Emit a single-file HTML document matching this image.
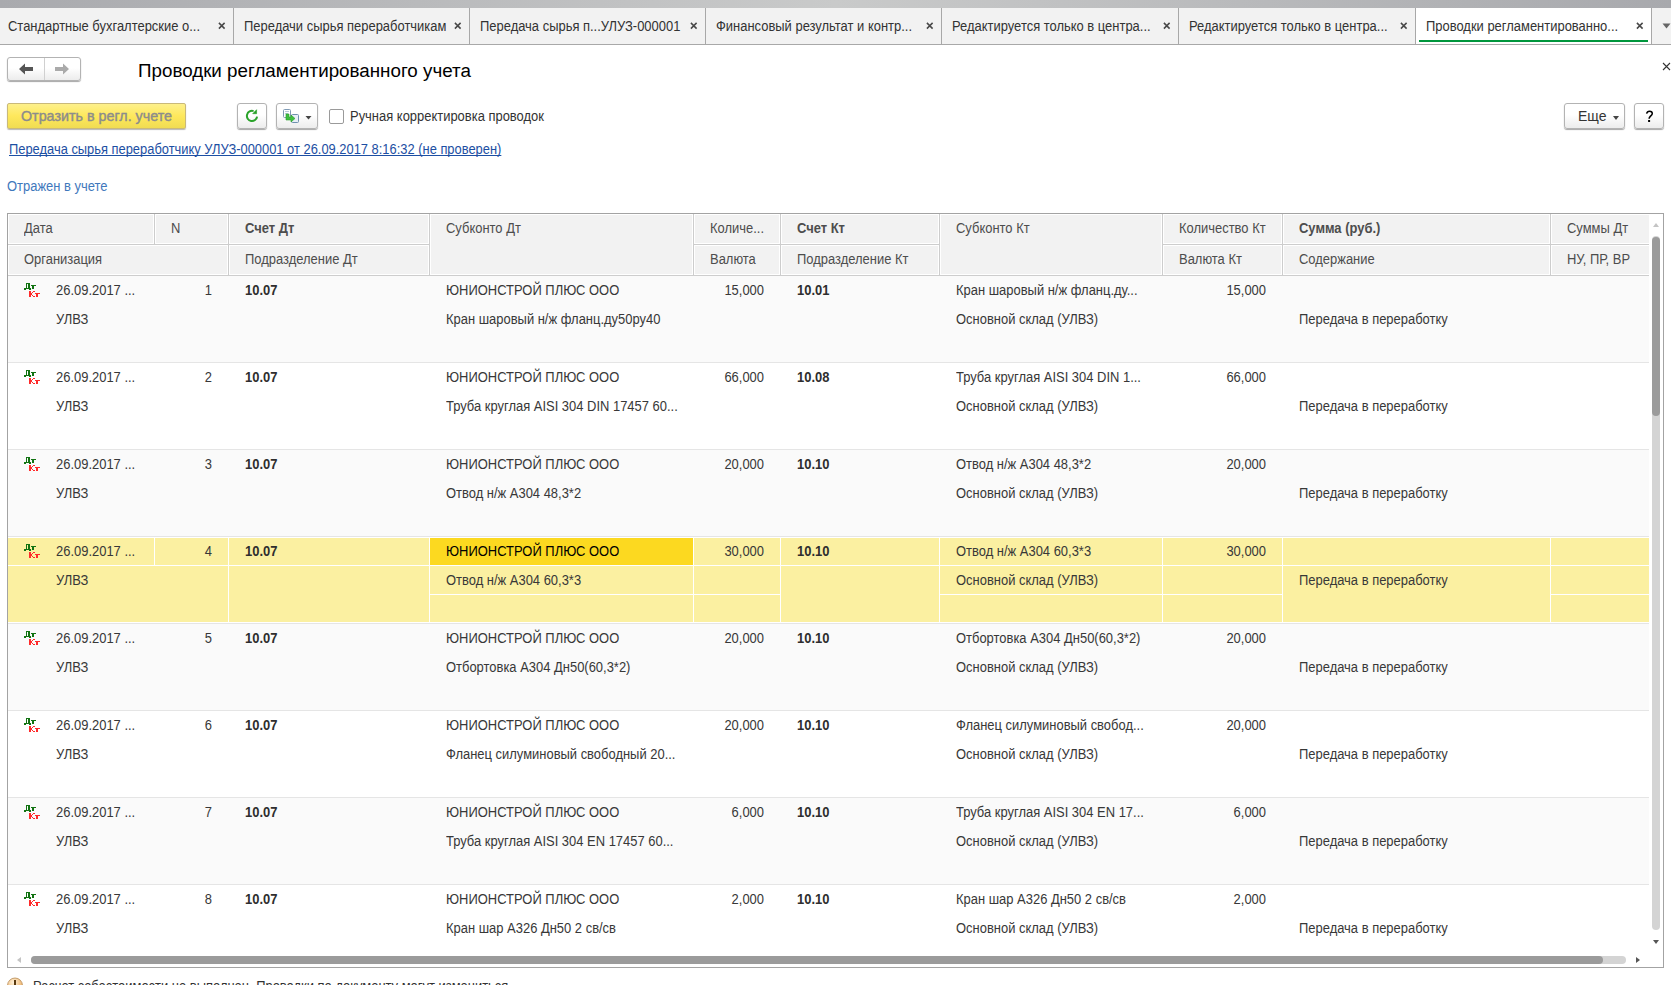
<!DOCTYPE html>
<html><head><meta charset="utf-8"><title>Проводки регламентированного учета</title><style>
*{margin:0;padding:0;box-sizing:content-box}
html,body{width:1671px;height:985px;overflow:hidden;background:#fff}
body{position:relative;font-family:"Liberation Sans",sans-serif;font-size:13px}
div,svg{position:absolute}
.t{white-space:nowrap;font-size:13px;line-height:15px}
.s{font-size:14px;transform:scaleX(0.925);transform-origin:0 0}
.btn{border:1px solid #b3b3b3;border-radius:3px;background:linear-gradient(#ffffff 0%,#ffffff 45%,#ececec 100%);box-shadow:0 1px 1px rgba(0,0,0,0.35)}
.ybtn{border:1px solid #c9b97a;border-radius:2px;background:linear-gradient(#fdf08c 0%,#fee85c 50%,#f0dc52 100%);box-shadow:0 1px 1px rgba(0,0,0,0.28)}
</style></head>
<body>
<div style="left:0px;top:0px;width:1671px;height:8px;background:linear-gradient(to right,#a9aaae 0%,#c9caca 50%,#a8a9ad 100%)"></div>
<div style="left:0px;top:8px;width:1671px;height:36px;background:#f2f2f2"></div>
<div style="left:0px;top:44px;width:1671px;height:1px;background:#a8a8a8"></div>
<div style="left:1416px;top:8px;width:235px;height:36px;background:#fff"></div>
<div style="left:1419px;top:40px;width:229px;height:2px;background:#00963c"></div>
<div style="left:233px;top:8px;width:1px;height:37px;background:#a8a8a8"></div>
<div style="left:469px;top:8px;width:1px;height:37px;background:#a8a8a8"></div>
<div style="left:705px;top:8px;width:1px;height:37px;background:#a8a8a8"></div>
<div style="left:941px;top:8px;width:1px;height:37px;background:#a8a8a8"></div>
<div style="left:1178px;top:8px;width:1px;height:37px;background:#a8a8a8"></div>
<div style="left:1415px;top:8px;width:1px;height:37px;background:#a8a8a8"></div>
<div style="left:1651px;top:8px;width:1px;height:37px;background:#a8a8a8"></div>
<div class="t s" style="left:8px;top:19px;color:#333;">Стандартные бухгалтерские о...</div>
<svg style="left:218px;top:22px" width="8" height="8" viewBox="0 0 8 8"><path d="M0.9 0.9L6.6 6.6M6.6 0.9L0.9 6.6" stroke="#474747" stroke-width="1.5"/></svg>
<div class="t s" style="left:244px;top:19px;color:#333;">Передачи сырья переработчикам</div>
<svg style="left:454px;top:22px" width="8" height="8" viewBox="0 0 8 8"><path d="M0.9 0.9L6.6 6.6M6.6 0.9L0.9 6.6" stroke="#474747" stroke-width="1.5"/></svg>
<div class="t s" style="left:480px;top:19px;color:#333;">Передача сырья п...УЛУЗ-000001</div>
<svg style="left:690px;top:22px" width="8" height="8" viewBox="0 0 8 8"><path d="M0.9 0.9L6.6 6.6M6.6 0.9L0.9 6.6" stroke="#474747" stroke-width="1.5"/></svg>
<div class="t s" style="left:716px;top:19px;color:#333;">Финансовый результат и контр...</div>
<svg style="left:926px;top:22px" width="8" height="8" viewBox="0 0 8 8"><path d="M0.9 0.9L6.6 6.6M6.6 0.9L0.9 6.6" stroke="#474747" stroke-width="1.5"/></svg>
<div class="t s" style="left:952px;top:19px;color:#333;">Редактируется только в центра...</div>
<svg style="left:1163px;top:22px" width="8" height="8" viewBox="0 0 8 8"><path d="M0.9 0.9L6.6 6.6M6.6 0.9L0.9 6.6" stroke="#474747" stroke-width="1.5"/></svg>
<div class="t s" style="left:1189px;top:19px;color:#333;">Редактируется только в центра...</div>
<svg style="left:1400px;top:22px" width="8" height="8" viewBox="0 0 8 8"><path d="M0.9 0.9L6.6 6.6M6.6 0.9L0.9 6.6" stroke="#474747" stroke-width="1.5"/></svg>
<div class="t s" style="left:1426px;top:19px;color:#333;">Проводки регламентированно...</div>
<svg style="left:1636px;top:22px" width="8" height="8" viewBox="0 0 8 8"><path d="M0.9 0.9L6.6 6.6M6.6 0.9L0.9 6.6" stroke="#474747" stroke-width="1.5"/></svg>
<svg style="left:1662px;top:23px" width="9" height="7" viewBox="0 0 9 7"><path d="M0.5 0.5H8.5L4.5 5.5Z" fill="#666"/></svg>
<div class="btn" style="left:7px;top:57px;width:72px;height:22px"></div>
<div style="left:44px;top:58px;width:1px;height:22px;background:#d0d0d0"></div>
<svg style="left:19px;top:63px" width="15" height="12" viewBox="0 0 15 12"><path d="M0 6L6 0.5V4H14V8H6V11.5Z" fill="#555"/></svg>
<svg style="left:55px;top:63px" width="15" height="12" viewBox="0 0 15 12"><path d="M14 6L8 0.5V4H0V8H8V11.5Z" fill="#aaa"/></svg>
<div class="t" style="left:138px;top:60px;font-size:18.8px;line-height:21px;color:#000">Проводки регламентированного учета</div>
<svg style="left:1662px;top:62px" width="9" height="9" viewBox="0 0 9 9"><path d="M1 1L8 8M8 1L1 8" stroke="#333" stroke-width="1.1"/></svg>
<div class="ybtn" style="left:7px;top:103px;width:177px;height:24px"></div>
<div class="t" style="left:21px;top:109px;color:#8c8c8c;font-size:14.3px;-webkit-text-stroke:0.4px #8c8c8c">Отразить в регл. учете</div>
<div class="btn" style="left:237px;top:103px;width:28px;height:24px"></div>
<svg style="left:242px;top:106px" width="20" height="20" viewBox="0 0 20 20"><path d="M15.07 10.53A5.1 5.1 0 1 1 11.6 5.1" fill="none" stroke="#2aa32a" stroke-width="2"/><path d="M14.6 3.7V7.7H10.7Z" fill="#26a026" stroke="#26a026" stroke-width="0.6" stroke-linejoin="round"/></svg>
<div class="btn" style="left:276px;top:103px;width:40px;height:24px"></div>
<svg style="left:280px;top:106px" width="22" height="20" viewBox="0 0 22 20"><rect x="3.5" y="3.5" width="7" height="8" rx="1" fill="#fff" stroke="#7f9ab5"/><rect x="5" y="5" width="4" height="1" fill="#b9c9da"/><rect x="5" y="7" width="3" height="1" fill="#b9c9da"/><rect x="11.5" y="8.5" width="7" height="8" rx="1" fill="#e8eff7" stroke="#6f8fae"/><path d="M6 8H9V11H11V9L15 12.5L11 16V14H6Z" fill="#3fbf3f" stroke="#2c9e2c" stroke-width="0.6" stroke-linejoin="round"/></svg>
<svg style="left:305px;top:116px" width="7" height="4" viewBox="0 0 7 4"><path d="M0.5 0H6.5L3.5 3.5Z" fill="#444"/></svg>
<div style="left:329px;top:109px;width:13px;height:13px;border:1px solid #9a9a9a;border-radius:2px;background:#fff"></div>
<div class="t s" style="left:350px;top:109px;color:#333;">Ручная корректировка проводок</div>
<div class="btn" style="left:1564px;top:103px;width:59px;height:24px"></div>
<div class="t" style="left:1578px;top:109px;color:#333;font-size:14px">Еще</div>
<svg style="left:1613px;top:116px" width="6" height="4" viewBox="0 0 6 4"><path d="M0 0H6L3 4Z" fill="#444"/></svg>
<div class="btn" style="left:1634px;top:103px;width:28px;height:24px"></div>
<svg style="left:1638px;top:106px" width="22" height="20" viewBox="0 0 22 20"><path d="M8.6 7.7C9 5.9 10.2 5.2 11.5 5.2C13.2 5.2 14.3 6.3 14.3 7.5C14.3 8.9 13.1 9.6 12.3 10.4C11.6 11.1 11.1 11.8 11.1 12.7" fill="none" stroke="#000" stroke-width="1.5"/><rect x="10.1" y="14" width="2" height="2" fill="#000"/></svg>
<div class="t s" style="left:9px;top:142px;color:#1d4fa3;text-decoration:underline;text-decoration-skip-ink:none;transform:scaleX(0.921)">Передача сырья переработчику УЛУЗ-000001 от 26.09.2017 8:16:32 (не проверен)</div>
<div class="t s" style="left:7px;top:179px;color:#3f78bc;">Отражен в учете</div>
<div style="left:7px;top:213px;width:1655px;height:753px;border:1px solid #a3a3a3;background:#fff"></div>
<div style="left:8px;top:214px;width:1641px;height:61px;background:#f2f2f2"></div>
<div style="left:8px;top:214px;width:144px;height:28px;border:1px solid #fff;background:#f2f2f2"></div>
<div style="left:155px;top:214px;width:71px;height:28px;border:1px solid #fff;background:#f2f2f2"></div>
<div style="left:8px;top:245px;width:218px;height:28px;border:1px solid #fff;background:#f2f2f2"></div>
<div style="left:229px;top:214px;width:198px;height:28px;border:1px solid #fff;background:#f2f2f2"></div>
<div style="left:229px;top:245px;width:198px;height:28px;border:1px solid #fff;background:#f2f2f2"></div>
<div style="left:430px;top:214px;width:261px;height:59px;border:1px solid #fff;background:#f2f2f2"></div>
<div style="left:694px;top:214px;width:84px;height:28px;border:1px solid #fff;background:#f2f2f2"></div>
<div style="left:694px;top:245px;width:84px;height:28px;border:1px solid #fff;background:#f2f2f2"></div>
<div style="left:781px;top:214px;width:156px;height:28px;border:1px solid #fff;background:#f2f2f2"></div>
<div style="left:781px;top:245px;width:156px;height:28px;border:1px solid #fff;background:#f2f2f2"></div>
<div style="left:940px;top:214px;width:220px;height:59px;border:1px solid #fff;background:#f2f2f2"></div>
<div style="left:1163px;top:214px;width:117px;height:28px;border:1px solid #fff;background:#f2f2f2"></div>
<div style="left:1163px;top:245px;width:117px;height:28px;border:1px solid #fff;background:#f2f2f2"></div>
<div style="left:1283px;top:214px;width:265px;height:28px;border:1px solid #fff;background:#f2f2f2"></div>
<div style="left:1283px;top:245px;width:265px;height:28px;border:1px solid #fff;background:#f2f2f2"></div>
<div style="left:1551px;top:214px;width:97px;height:28px;border:1px solid #fff;background:#f2f2f2"></div>
<div style="left:1551px;top:245px;width:97px;height:28px;border:1px solid #fff;background:#f2f2f2"></div>
<div style="left:8px;top:244px;width:421px;height:1px;background:#cdcdcd"></div>
<div style="left:693px;top:244px;width:246px;height:1px;background:#cdcdcd"></div>
<div style="left:1162px;top:244px;width:487px;height:1px;background:#cdcdcd"></div>
<div style="left:8px;top:275px;width:1641px;height:1px;background:#cdcdcd"></div>
<div style="left:154px;top:214px;width:1px;height:30px;background:#cdcdcd"></div>
<div style="left:228px;top:214px;width:1px;height:61px;background:#cdcdcd"></div>
<div style="left:429px;top:214px;width:1px;height:61px;background:#cdcdcd"></div>
<div style="left:693px;top:214px;width:1px;height:61px;background:#cdcdcd"></div>
<div style="left:780px;top:214px;width:1px;height:61px;background:#cdcdcd"></div>
<div style="left:939px;top:214px;width:1px;height:61px;background:#cdcdcd"></div>
<div style="left:1162px;top:214px;width:1px;height:61px;background:#cdcdcd"></div>
<div style="left:1282px;top:214px;width:1px;height:61px;background:#cdcdcd"></div>
<div style="left:1550px;top:214px;width:1px;height:61px;background:#cdcdcd"></div>
<div class="t s" style="left:24px;top:221px;color:#4d4d4d;">Дата</div>
<div class="t s" style="left:171px;top:221px;color:#4d4d4d;">N</div>
<div class="t s" style="left:245px;top:221px;font-weight:bold;color:#4d4d4d;">Счет Дт</div>
<div class="t s" style="left:446px;top:221px;color:#4d4d4d;">Субконто Дт</div>
<div class="t s" style="left:710px;top:221px;color:#4d4d4d;">Количе...</div>
<div class="t s" style="left:797px;top:221px;font-weight:bold;color:#4d4d4d;">Счет Кт</div>
<div class="t s" style="left:956px;top:221px;color:#4d4d4d;">Субконто Кт</div>
<div class="t s" style="left:1179px;top:221px;color:#4d4d4d;">Количество Кт</div>
<div class="t s" style="left:1299px;top:221px;font-weight:bold;color:#4d4d4d;">Сумма (руб.)</div>
<div class="t s" style="left:1567px;top:221px;color:#4d4d4d;">Суммы Дт</div>
<div class="t s" style="left:24px;top:252px;color:#4d4d4d;">Организация</div>
<div class="t s" style="left:245px;top:252px;color:#4d4d4d;">Подразделение Дт</div>
<div class="t s" style="left:710px;top:252px;color:#4d4d4d;">Валюта</div>
<div class="t s" style="left:797px;top:252px;color:#4d4d4d;">Подразделение Кт</div>
<div class="t s" style="left:1179px;top:252px;color:#4d4d4d;">Валюта Кт</div>
<div class="t s" style="left:1299px;top:252px;color:#4d4d4d;">Содержание</div>
<div class="t s" style="left:1567px;top:252px;color:#4d4d4d;">НУ, ПР, ВР</div>
<div style="left:8px;top:276px;width:1641px;height:674px;overflow:hidden">
<div style="left:0px;top:0px;width:1641px;height:86px;background:#fafafa"></div>
<div style="left:0px;top:86px;width:1641px;height:1px;background:#e5e5e5"></div>
<svg style="left:16px;top:7px" width="16" height="14" viewBox="0 0 16 14" shape-rendering="crispEdges"><g fill="#127312"><rect x="2" y="0" width="4" height="1"/><rect x="2" y="0" width="1" height="5"/><rect x="4" y="0" width="2" height="5"/><rect x="1" y="5" width="6" height="1"/><rect x="0" y="5" width="2" height="2"/><rect x="5" y="5" width="2" height="2"/><rect x="7" y="2" width="5" height="1"/><rect x="8" y="3" width="2" height="3"/></g><g fill="#ff2a2a"><rect x="5" y="8" width="2" height="6"/><rect x="7" y="10" width="1" height="2"/><rect x="8" y="9" width="1" height="1"/><rect x="9" y="8" width="2" height="1"/><rect x="8" y="12" width="1" height="1"/><rect x="9" y="13" width="2" height="1"/><rect x="11" y="10" width="5" height="1"/><rect x="12" y="11" width="2" height="3"/></g></svg>
<div class="t s" style="left:48px;top:7px;color:#383838;">26.09.2017 ...</div>
<div class="t s" style="left:4px;width:200px;top:7px;color:#383838;text-align:right;transform-origin:100% 0">1</div>
<div class="t s" style="left:237px;top:7px;font-weight:bold;color:#2e2e2e;">10.07</div>
<div class="t s" style="left:438px;top:7px;color:#383838;">ЮНИОНСТРОЙ ПЛЮС ООО</div>
<div class="t s" style="left:556px;width:200px;top:7px;color:#383838;text-align:right;transform-origin:100% 0">15,000</div>
<div class="t s" style="left:789px;top:7px;font-weight:bold;color:#2e2e2e;">10.01</div>
<div class="t s" style="left:948px;top:7px;color:#383838;">Кран шаровый н/ж фланц.ду...</div>
<div class="t s" style="left:1058px;width:200px;top:7px;color:#383838;text-align:right;transform-origin:100% 0">15,000</div>
<div class="t s" style="left:48px;top:36px;color:#383838;">УЛВЗ</div>
<div class="t s" style="left:438px;top:36px;color:#383838;">Кран шаровый н/ж фланц.ду50ру40</div>
<div class="t s" style="left:948px;top:36px;color:#383838;">Основной склад (УЛВЗ)</div>
<div class="t s" style="left:1291px;top:36px;color:#383838;">Передача в переработку</div>
<div style="left:0px;top:87px;width:1641px;height:86px;background:#fff"></div>
<div style="left:0px;top:173px;width:1641px;height:1px;background:#e5e5e5"></div>
<svg style="left:16px;top:94px" width="16" height="14" viewBox="0 0 16 14" shape-rendering="crispEdges"><g fill="#127312"><rect x="2" y="0" width="4" height="1"/><rect x="2" y="0" width="1" height="5"/><rect x="4" y="0" width="2" height="5"/><rect x="1" y="5" width="6" height="1"/><rect x="0" y="5" width="2" height="2"/><rect x="5" y="5" width="2" height="2"/><rect x="7" y="2" width="5" height="1"/><rect x="8" y="3" width="2" height="3"/></g><g fill="#ff2a2a"><rect x="5" y="8" width="2" height="6"/><rect x="7" y="10" width="1" height="2"/><rect x="8" y="9" width="1" height="1"/><rect x="9" y="8" width="2" height="1"/><rect x="8" y="12" width="1" height="1"/><rect x="9" y="13" width="2" height="1"/><rect x="11" y="10" width="5" height="1"/><rect x="12" y="11" width="2" height="3"/></g></svg>
<div class="t s" style="left:48px;top:94px;color:#383838;">26.09.2017 ...</div>
<div class="t s" style="left:4px;width:200px;top:94px;color:#383838;text-align:right;transform-origin:100% 0">2</div>
<div class="t s" style="left:237px;top:94px;font-weight:bold;color:#2e2e2e;">10.07</div>
<div class="t s" style="left:438px;top:94px;color:#383838;">ЮНИОНСТРОЙ ПЛЮС ООО</div>
<div class="t s" style="left:556px;width:200px;top:94px;color:#383838;text-align:right;transform-origin:100% 0">66,000</div>
<div class="t s" style="left:789px;top:94px;font-weight:bold;color:#2e2e2e;">10.08</div>
<div class="t s" style="left:948px;top:94px;color:#383838;">Труба круглая AISI 304 DIN 1...</div>
<div class="t s" style="left:1058px;width:200px;top:94px;color:#383838;text-align:right;transform-origin:100% 0">66,000</div>
<div class="t s" style="left:48px;top:123px;color:#383838;">УЛВЗ</div>
<div class="t s" style="left:438px;top:123px;color:#383838;">Труба круглая AISI 304 DIN 17457 60...</div>
<div class="t s" style="left:948px;top:123px;color:#383838;">Основной склад (УЛВЗ)</div>
<div class="t s" style="left:1291px;top:123px;color:#383838;">Передача в переработку</div>
<div style="left:0px;top:174px;width:1641px;height:86px;background:#fafafa"></div>
<div style="left:0px;top:260px;width:1641px;height:1px;background:#e5e5e5"></div>
<svg style="left:16px;top:181px" width="16" height="14" viewBox="0 0 16 14" shape-rendering="crispEdges"><g fill="#127312"><rect x="2" y="0" width="4" height="1"/><rect x="2" y="0" width="1" height="5"/><rect x="4" y="0" width="2" height="5"/><rect x="1" y="5" width="6" height="1"/><rect x="0" y="5" width="2" height="2"/><rect x="5" y="5" width="2" height="2"/><rect x="7" y="2" width="5" height="1"/><rect x="8" y="3" width="2" height="3"/></g><g fill="#ff2a2a"><rect x="5" y="8" width="2" height="6"/><rect x="7" y="10" width="1" height="2"/><rect x="8" y="9" width="1" height="1"/><rect x="9" y="8" width="2" height="1"/><rect x="8" y="12" width="1" height="1"/><rect x="9" y="13" width="2" height="1"/><rect x="11" y="10" width="5" height="1"/><rect x="12" y="11" width="2" height="3"/></g></svg>
<div class="t s" style="left:48px;top:181px;color:#383838;">26.09.2017 ...</div>
<div class="t s" style="left:4px;width:200px;top:181px;color:#383838;text-align:right;transform-origin:100% 0">3</div>
<div class="t s" style="left:237px;top:181px;font-weight:bold;color:#2e2e2e;">10.07</div>
<div class="t s" style="left:438px;top:181px;color:#383838;">ЮНИОНСТРОЙ ПЛЮС ООО</div>
<div class="t s" style="left:556px;width:200px;top:181px;color:#383838;text-align:right;transform-origin:100% 0">20,000</div>
<div class="t s" style="left:789px;top:181px;font-weight:bold;color:#2e2e2e;">10.10</div>
<div class="t s" style="left:948px;top:181px;color:#383838;">Отвод н/ж А304 48,3*2</div>
<div class="t s" style="left:1058px;width:200px;top:181px;color:#383838;text-align:right;transform-origin:100% 0">20,000</div>
<div class="t s" style="left:48px;top:210px;color:#383838;">УЛВЗ</div>
<div class="t s" style="left:438px;top:210px;color:#383838;">Отвод н/ж А304 48,3*2</div>
<div class="t s" style="left:948px;top:210px;color:#383838;">Основной склад (УЛВЗ)</div>
<div class="t s" style="left:1291px;top:210px;color:#383838;">Передача в переработку</div>
<div style="left:0px;top:261px;width:1641px;height:86px;background:#fff"></div>
<div style="left:0px;top:262px;width:146px;height:27px;background:#fbf0a1"></div>
<div style="left:147px;top:262px;width:73px;height:27px;background:#fbf0a1"></div>
<div style="left:221px;top:262px;width:200px;height:27px;background:#fbf0a1"></div>
<div style="left:422px;top:262px;width:263px;height:27px;background:#fbf0a1"></div>
<div style="left:686px;top:262px;width:86px;height:27px;background:#fbf0a1"></div>
<div style="left:773px;top:262px;width:158px;height:27px;background:#fbf0a1"></div>
<div style="left:932px;top:262px;width:222px;height:27px;background:#fbf0a1"></div>
<div style="left:1155px;top:262px;width:119px;height:27px;background:#fbf0a1"></div>
<div style="left:1275px;top:262px;width:267px;height:27px;background:#fbf0a1"></div>
<div style="left:1543px;top:262px;width:98px;height:27px;background:#fbf0a1"></div>
<div style="left:0px;top:290px;width:220px;height:56px;background:#fbf0a1"></div>
<div style="left:221px;top:290px;width:200px;height:56px;background:#fbf0a1"></div>
<div style="left:422px;top:290px;width:263px;height:28px;background:#fbf0a1"></div>
<div style="left:422px;top:319px;width:263px;height:27px;background:#fbf0a1"></div>
<div style="left:686px;top:290px;width:86px;height:28px;background:#fbf0a1"></div>
<div style="left:686px;top:319px;width:86px;height:27px;background:#fbf0a1"></div>
<div style="left:773px;top:290px;width:158px;height:56px;background:#fbf0a1"></div>
<div style="left:932px;top:290px;width:222px;height:28px;background:#fbf0a1"></div>
<div style="left:932px;top:319px;width:222px;height:27px;background:#fbf0a1"></div>
<div style="left:1155px;top:290px;width:119px;height:28px;background:#fbf0a1"></div>
<div style="left:1155px;top:319px;width:119px;height:27px;background:#fbf0a1"></div>
<div style="left:1275px;top:290px;width:267px;height:56px;background:#fbf0a1"></div>
<div style="left:1543px;top:290px;width:98px;height:28px;background:#fbf0a1"></div>
<div style="left:1543px;top:319px;width:98px;height:27px;background:#fbf0a1"></div>
<div style="left:422px;top:262px;width:263px;height:27px;background:#fcd920"></div>
<div style="left:0px;top:347px;width:1641px;height:1px;background:#e5e5e5"></div>
<svg style="left:16px;top:268px" width="16" height="14" viewBox="0 0 16 14" shape-rendering="crispEdges"><g fill="#127312"><rect x="2" y="0" width="4" height="1"/><rect x="2" y="0" width="1" height="5"/><rect x="4" y="0" width="2" height="5"/><rect x="1" y="5" width="6" height="1"/><rect x="0" y="5" width="2" height="2"/><rect x="5" y="5" width="2" height="2"/><rect x="7" y="2" width="5" height="1"/><rect x="8" y="3" width="2" height="3"/></g><g fill="#ff2a2a"><rect x="5" y="8" width="2" height="6"/><rect x="7" y="10" width="1" height="2"/><rect x="8" y="9" width="1" height="1"/><rect x="9" y="8" width="2" height="1"/><rect x="8" y="12" width="1" height="1"/><rect x="9" y="13" width="2" height="1"/><rect x="11" y="10" width="5" height="1"/><rect x="12" y="11" width="2" height="3"/></g></svg>
<div class="t s" style="left:48px;top:268px;color:#383838;">26.09.2017 ...</div>
<div class="t s" style="left:4px;width:200px;top:268px;color:#383838;text-align:right;transform-origin:100% 0">4</div>
<div class="t s" style="left:237px;top:268px;font-weight:bold;color:#2e2e2e;">10.07</div>
<div class="t s" style="left:438px;top:268px;color:#000;">ЮНИОНСТРОЙ ПЛЮС ООО</div>
<div class="t s" style="left:556px;width:200px;top:268px;color:#383838;text-align:right;transform-origin:100% 0">30,000</div>
<div class="t s" style="left:789px;top:268px;font-weight:bold;color:#2e2e2e;">10.10</div>
<div class="t s" style="left:948px;top:268px;color:#383838;">Отвод н/ж А304 60,3*3</div>
<div class="t s" style="left:1058px;width:200px;top:268px;color:#383838;text-align:right;transform-origin:100% 0">30,000</div>
<div class="t s" style="left:48px;top:297px;color:#383838;">УЛВЗ</div>
<div class="t s" style="left:438px;top:297px;color:#383838;">Отвод н/ж А304 60,3*3</div>
<div class="t s" style="left:948px;top:297px;color:#383838;">Основной склад (УЛВЗ)</div>
<div class="t s" style="left:1291px;top:297px;color:#383838;">Передача в переработку</div>
<div style="left:0px;top:348px;width:1641px;height:86px;background:#fafafa"></div>
<div style="left:0px;top:434px;width:1641px;height:1px;background:#e5e5e5"></div>
<svg style="left:16px;top:355px" width="16" height="14" viewBox="0 0 16 14" shape-rendering="crispEdges"><g fill="#127312"><rect x="2" y="0" width="4" height="1"/><rect x="2" y="0" width="1" height="5"/><rect x="4" y="0" width="2" height="5"/><rect x="1" y="5" width="6" height="1"/><rect x="0" y="5" width="2" height="2"/><rect x="5" y="5" width="2" height="2"/><rect x="7" y="2" width="5" height="1"/><rect x="8" y="3" width="2" height="3"/></g><g fill="#ff2a2a"><rect x="5" y="8" width="2" height="6"/><rect x="7" y="10" width="1" height="2"/><rect x="8" y="9" width="1" height="1"/><rect x="9" y="8" width="2" height="1"/><rect x="8" y="12" width="1" height="1"/><rect x="9" y="13" width="2" height="1"/><rect x="11" y="10" width="5" height="1"/><rect x="12" y="11" width="2" height="3"/></g></svg>
<div class="t s" style="left:48px;top:355px;color:#383838;">26.09.2017 ...</div>
<div class="t s" style="left:4px;width:200px;top:355px;color:#383838;text-align:right;transform-origin:100% 0">5</div>
<div class="t s" style="left:237px;top:355px;font-weight:bold;color:#2e2e2e;">10.07</div>
<div class="t s" style="left:438px;top:355px;color:#383838;">ЮНИОНСТРОЙ ПЛЮС ООО</div>
<div class="t s" style="left:556px;width:200px;top:355px;color:#383838;text-align:right;transform-origin:100% 0">20,000</div>
<div class="t s" style="left:789px;top:355px;font-weight:bold;color:#2e2e2e;">10.10</div>
<div class="t s" style="left:948px;top:355px;color:#383838;">Отбортовка А304 Дн50(60,3*2)</div>
<div class="t s" style="left:1058px;width:200px;top:355px;color:#383838;text-align:right;transform-origin:100% 0">20,000</div>
<div class="t s" style="left:48px;top:384px;color:#383838;">УЛВЗ</div>
<div class="t s" style="left:438px;top:384px;color:#383838;">Отбортовка А304 Дн50(60,3*2)</div>
<div class="t s" style="left:948px;top:384px;color:#383838;">Основной склад (УЛВЗ)</div>
<div class="t s" style="left:1291px;top:384px;color:#383838;">Передача в переработку</div>
<div style="left:0px;top:435px;width:1641px;height:86px;background:#fff"></div>
<div style="left:0px;top:521px;width:1641px;height:1px;background:#e5e5e5"></div>
<svg style="left:16px;top:442px" width="16" height="14" viewBox="0 0 16 14" shape-rendering="crispEdges"><g fill="#127312"><rect x="2" y="0" width="4" height="1"/><rect x="2" y="0" width="1" height="5"/><rect x="4" y="0" width="2" height="5"/><rect x="1" y="5" width="6" height="1"/><rect x="0" y="5" width="2" height="2"/><rect x="5" y="5" width="2" height="2"/><rect x="7" y="2" width="5" height="1"/><rect x="8" y="3" width="2" height="3"/></g><g fill="#ff2a2a"><rect x="5" y="8" width="2" height="6"/><rect x="7" y="10" width="1" height="2"/><rect x="8" y="9" width="1" height="1"/><rect x="9" y="8" width="2" height="1"/><rect x="8" y="12" width="1" height="1"/><rect x="9" y="13" width="2" height="1"/><rect x="11" y="10" width="5" height="1"/><rect x="12" y="11" width="2" height="3"/></g></svg>
<div class="t s" style="left:48px;top:442px;color:#383838;">26.09.2017 ...</div>
<div class="t s" style="left:4px;width:200px;top:442px;color:#383838;text-align:right;transform-origin:100% 0">6</div>
<div class="t s" style="left:237px;top:442px;font-weight:bold;color:#2e2e2e;">10.07</div>
<div class="t s" style="left:438px;top:442px;color:#383838;">ЮНИОНСТРОЙ ПЛЮС ООО</div>
<div class="t s" style="left:556px;width:200px;top:442px;color:#383838;text-align:right;transform-origin:100% 0">20,000</div>
<div class="t s" style="left:789px;top:442px;font-weight:bold;color:#2e2e2e;">10.10</div>
<div class="t s" style="left:948px;top:442px;color:#383838;">Фланец силуминовый свобод...</div>
<div class="t s" style="left:1058px;width:200px;top:442px;color:#383838;text-align:right;transform-origin:100% 0">20,000</div>
<div class="t s" style="left:48px;top:471px;color:#383838;">УЛВЗ</div>
<div class="t s" style="left:438px;top:471px;color:#383838;">Фланец силуминовый свободный 20...</div>
<div class="t s" style="left:948px;top:471px;color:#383838;">Основной склад (УЛВЗ)</div>
<div class="t s" style="left:1291px;top:471px;color:#383838;">Передача в переработку</div>
<div style="left:0px;top:522px;width:1641px;height:86px;background:#fafafa"></div>
<div style="left:0px;top:608px;width:1641px;height:1px;background:#e5e5e5"></div>
<svg style="left:16px;top:529px" width="16" height="14" viewBox="0 0 16 14" shape-rendering="crispEdges"><g fill="#127312"><rect x="2" y="0" width="4" height="1"/><rect x="2" y="0" width="1" height="5"/><rect x="4" y="0" width="2" height="5"/><rect x="1" y="5" width="6" height="1"/><rect x="0" y="5" width="2" height="2"/><rect x="5" y="5" width="2" height="2"/><rect x="7" y="2" width="5" height="1"/><rect x="8" y="3" width="2" height="3"/></g><g fill="#ff2a2a"><rect x="5" y="8" width="2" height="6"/><rect x="7" y="10" width="1" height="2"/><rect x="8" y="9" width="1" height="1"/><rect x="9" y="8" width="2" height="1"/><rect x="8" y="12" width="1" height="1"/><rect x="9" y="13" width="2" height="1"/><rect x="11" y="10" width="5" height="1"/><rect x="12" y="11" width="2" height="3"/></g></svg>
<div class="t s" style="left:48px;top:529px;color:#383838;">26.09.2017 ...</div>
<div class="t s" style="left:4px;width:200px;top:529px;color:#383838;text-align:right;transform-origin:100% 0">7</div>
<div class="t s" style="left:237px;top:529px;font-weight:bold;color:#2e2e2e;">10.07</div>
<div class="t s" style="left:438px;top:529px;color:#383838;">ЮНИОНСТРОЙ ПЛЮС ООО</div>
<div class="t s" style="left:556px;width:200px;top:529px;color:#383838;text-align:right;transform-origin:100% 0">6,000</div>
<div class="t s" style="left:789px;top:529px;font-weight:bold;color:#2e2e2e;">10.10</div>
<div class="t s" style="left:948px;top:529px;color:#383838;">Труба круглая AISI 304 EN 17...</div>
<div class="t s" style="left:1058px;width:200px;top:529px;color:#383838;text-align:right;transform-origin:100% 0">6,000</div>
<div class="t s" style="left:48px;top:558px;color:#383838;">УЛВЗ</div>
<div class="t s" style="left:438px;top:558px;color:#383838;">Труба круглая AISI 304 EN 17457 60...</div>
<div class="t s" style="left:948px;top:558px;color:#383838;">Основной склад (УЛВЗ)</div>
<div class="t s" style="left:1291px;top:558px;color:#383838;">Передача в переработку</div>
<div style="left:0px;top:609px;width:1641px;height:86px;background:#fff"></div>
<div style="left:0px;top:695px;width:1641px;height:1px;background:#e5e5e5"></div>
<svg style="left:16px;top:616px" width="16" height="14" viewBox="0 0 16 14" shape-rendering="crispEdges"><g fill="#127312"><rect x="2" y="0" width="4" height="1"/><rect x="2" y="0" width="1" height="5"/><rect x="4" y="0" width="2" height="5"/><rect x="1" y="5" width="6" height="1"/><rect x="0" y="5" width="2" height="2"/><rect x="5" y="5" width="2" height="2"/><rect x="7" y="2" width="5" height="1"/><rect x="8" y="3" width="2" height="3"/></g><g fill="#ff2a2a"><rect x="5" y="8" width="2" height="6"/><rect x="7" y="10" width="1" height="2"/><rect x="8" y="9" width="1" height="1"/><rect x="9" y="8" width="2" height="1"/><rect x="8" y="12" width="1" height="1"/><rect x="9" y="13" width="2" height="1"/><rect x="11" y="10" width="5" height="1"/><rect x="12" y="11" width="2" height="3"/></g></svg>
<div class="t s" style="left:48px;top:616px;color:#383838;">26.09.2017 ...</div>
<div class="t s" style="left:4px;width:200px;top:616px;color:#383838;text-align:right;transform-origin:100% 0">8</div>
<div class="t s" style="left:237px;top:616px;font-weight:bold;color:#2e2e2e;">10.07</div>
<div class="t s" style="left:438px;top:616px;color:#383838;">ЮНИОНСТРОЙ ПЛЮС ООО</div>
<div class="t s" style="left:556px;width:200px;top:616px;color:#383838;text-align:right;transform-origin:100% 0">2,000</div>
<div class="t s" style="left:789px;top:616px;font-weight:bold;color:#2e2e2e;">10.10</div>
<div class="t s" style="left:948px;top:616px;color:#383838;">Кран шар А326 Дн50 2 св/св</div>
<div class="t s" style="left:1058px;width:200px;top:616px;color:#383838;text-align:right;transform-origin:100% 0">2,000</div>
<div class="t s" style="left:48px;top:645px;color:#383838;">УЛВЗ</div>
<div class="t s" style="left:438px;top:645px;color:#383838;">Кран шар А326 Дн50 2 св/св</div>
<div class="t s" style="left:948px;top:645px;color:#383838;">Основной склад (УЛВЗ)</div>
<div class="t s" style="left:1291px;top:645px;color:#383838;">Передача в переработку</div>
</div>
<svg style="left:1652px;top:222px" width="8" height="6" viewBox="0 0 8 6"><path d="M1 5H7L4 1Z" fill="#c4c4c4"/></svg>
<div style="left:1652px;top:236px;width:8px;height:694px;background:#d4d4d4;border-radius:4px"></div>
<div style="left:1652px;top:237px;width:8px;height:179px;background:#9b9b9b;border-radius:4px"></div>
<svg style="left:1652px;top:939px" width="8" height="6" viewBox="0 0 8 6"><path d="M1 1H7L4 5Z" fill="#555"/></svg>
<svg style="left:16px;top:956px" width="6" height="8" viewBox="0 0 6 8"><path d="M5 1V7L1 4Z" fill="#c4c4c4"/></svg>
<div style="left:31px;top:956px;width:1595px;height:8px;background:#d4d4d4;border-radius:4px"></div>
<div style="left:31px;top:956px;width:1572px;height:8px;background:#9b9b9b;border-radius:4px"></div>
<svg style="left:1635px;top:956px" width="6" height="8" viewBox="0 0 6 8"><path d="M1 1V7L5 4Z" fill="#555"/></svg>
<svg style="left:7px;top:977px" width="17" height="17" viewBox="0 0 17 17"><defs><radialGradient id="wg" cx="0.4" cy="0.3" r="0.8"><stop offset="0" stop-color="#fff3dc"/><stop offset="1" stop-color="#e9a04a"/></radialGradient></defs><circle cx="8" cy="8.5" r="7.5" fill="url(#wg)" stroke="#b58a55" stroke-width="0.8"/><rect x="7" y="3" width="2" height="7" fill="#5a3a10"/></svg>
<div class="t s" style="left:33px;top:979px;color:#333;">Расчет себестоимости не выполнен. Проводки по документу могут измениться</div>
</body></html>
